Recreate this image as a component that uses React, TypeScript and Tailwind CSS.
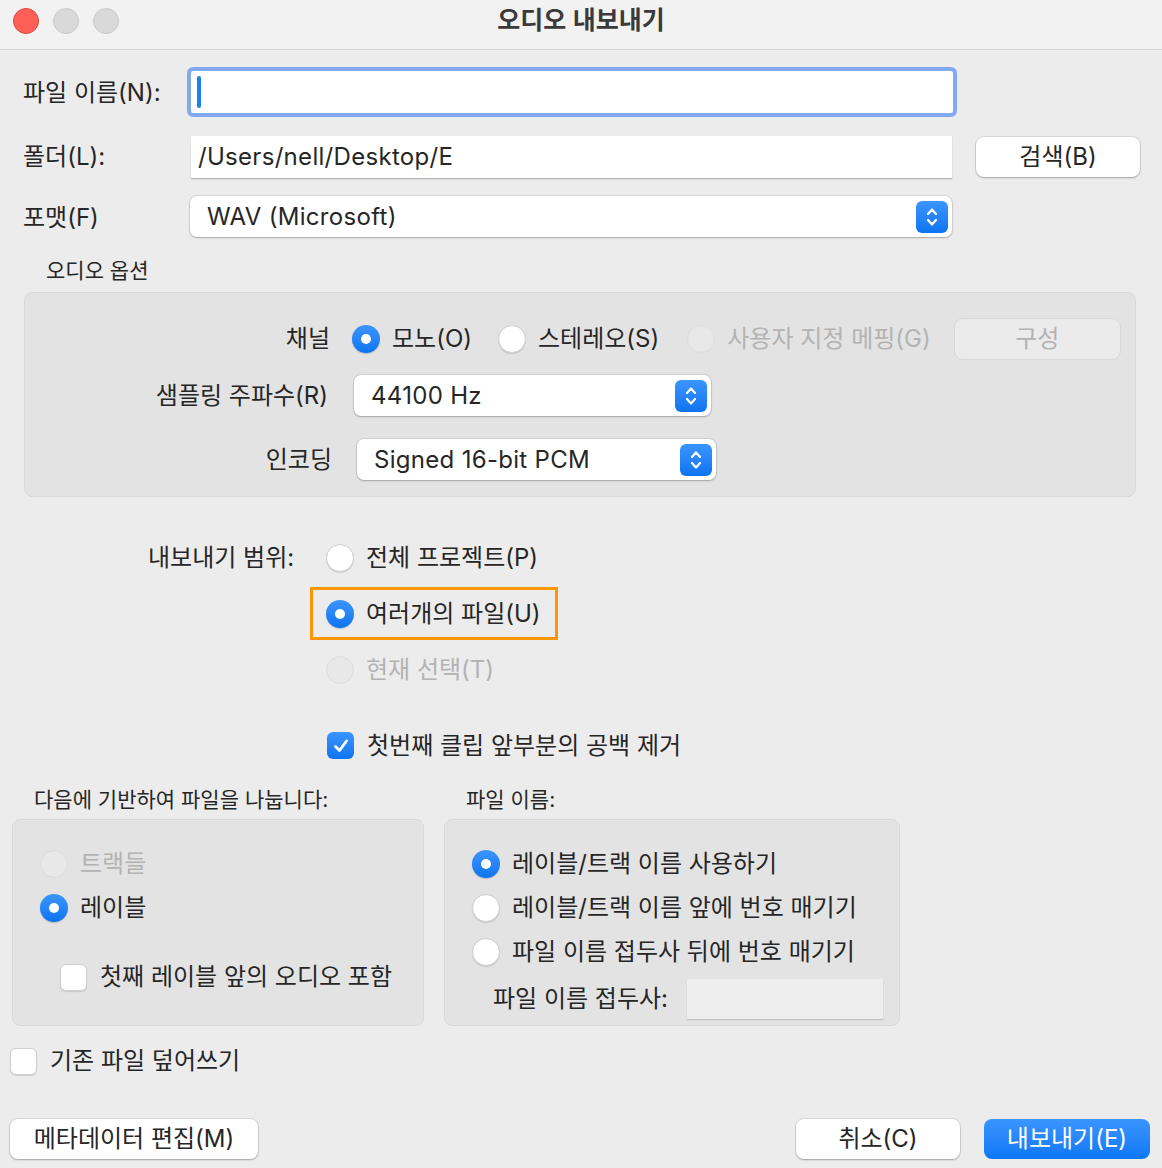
import React from 'react';

const Radio: React.FC<{ checked?: boolean; disabled?: boolean }> = ({ checked, disabled }) => {
    if (checked) {
        return (
            <div className="w-[28px] h-[28px] shrink-0 rounded-full bg-gradient-to-b from-[#3b95ff] to-[#0a74f0] flex items-center justify-center shadow-[0_1px_1px_rgba(0,0,0,0.2)]">
                <div className="w-[10px] h-[10px] rounded-full bg-white" />
            </div>
        );
    }
    if (disabled) {
        return <div className="w-[28px] h-[28px] shrink-0 rounded-full bg-[#e8e8e8] border border-[#dcdcdc]" />;
    }
    return <div className="w-[28px] h-[28px] shrink-0 rounded-full bg-white border border-[#cfcfcf] shadow-[0_1px_1px_rgba(0,0,0,0.12)]" />;
};

const Checkbox: React.FC<{ checked?: boolean }> = ({ checked }) =>
    checked ? (
        <div className="w-[27px] h-[27px] shrink-0 rounded-[6px] bg-gradient-to-b from-[#3b95ff] to-[#0a74f0] flex items-center justify-center">
            <svg width="18" height="18" viewBox="0 0 18 18">
                <path d="M3.5 9.5 L7.5 13.5 L14.5 4" fill="none" stroke="white" strokeWidth="2.8" strokeLinecap="round" strokeLinejoin="round" />
            </svg>
        </div>
    ) : (
        <div className="w-[27px] h-[27px] shrink-0 rounded-[6px] bg-white border border-[#cfcfcf] shadow-[0_1px_1px_rgba(0,0,0,0.12)]" />
    );

const Stepper = () => (
    <div className="w-[32px] h-[32px] shrink-0 rounded-[6px] bg-gradient-to-b from-[#3b95ff] to-[#0a74f0] flex items-center justify-center">
        <svg width="16" height="24" viewBox="0 0 16 24">
            <path d="M4 9 L8 4.5 L12 9" fill="none" stroke="white" strokeWidth="2.2" strokeLinecap="round" strokeLinejoin="round" />
            <path d="M4 15 L8 19.5 L12 15" fill="none" stroke="white" strokeWidth="2.2" strokeLinecap="round" strokeLinejoin="round" />
        </svg>
    </div>
);

const Select: React.FC<{ value: string; className: string }> = ({ value, className }) => (
    <div className={`h-[41px] rounded-[7px] bg-white flex items-center justify-between pl-[17px] pr-[4px] shadow-[0_0_0_1px_rgba(0,0,0,0.08),0_1px_2px_rgba(0,0,0,0.22)] ${className}`}>
        <span className="tracking-[0.3px]">{value}</span>
        <Stepper />
    </div>
);

const Button: React.FC<{ label: string; className: string; primary?: boolean; disabled?: boolean }> = ({ label, className, primary, disabled }) => (
    <div
        className={`h-[40px] rounded-[8px] flex items-center justify-center shrink-0 ${
            primary
                ? 'bg-gradient-to-b from-[#3a95ff] to-[#0b77f5] text-white'
                : disabled
                ? 'bg-[#ebebeb] text-[#b3b3b3] shadow-[0_0_0_1px_rgba(0,0,0,0.05)]'
                : 'bg-white shadow-[0_0_0_1px_rgba(0,0,0,0.08),0_1px_2px_rgba(0,0,0,0.25)]'
        } ${className}`}
    >
        {label}
    </div>
);

export default function App() {
    return (
        <div className="w-[1162px] h-[1168px] bg-[#ececec] text-[#262626] text-[24px] leading-none font-[Inter,'Noto_Sans_CJK_KR',sans-serif] overflow-hidden">
            {/* title bar */}
            <div className="h-[50px] bg-[#f2f2f2] border-b border-[#d4d4d4] grid grid-cols-[1fr_auto_1fr]">
                <div className="flex gap-[14px] pl-[13px] pt-[8px]">
                    <div className="w-[26px] h-[26px] rounded-full bg-[#fe5f57] border border-[#e0443e]" />
                    <div className="w-[26px] h-[26px] rounded-full bg-[#d9d9d9] border border-[#c9c9c9]" />
                    <div className="w-[26px] h-[26px] rounded-full bg-[#d9d9d9] border border-[#c9c9c9]" />
                </div>
                <div className="pt-[8px] text-[25px] font-semibold text-[#3a3a3a]">오디오 내보내기</div>
                <div />
            </div>

            {/* file name */}
            <div className="flex items-center mt-[17px] h-[50px]">
                <div className="w-[187px] pl-[23px] pt-[2px] shrink-0">파일 이름(N):</div>
                <div className="w-[770px] h-[50px] rounded-[6px] border-[4px] border-[#82a9ee] bg-white flex items-center pl-[6px]">
                    <div className="w-[4px] h-[32px] rounded-full bg-[#1b7ff5]" />
                </div>
            </div>

            {/* folder */}
            <div className="flex items-center mt-[19px] h-[42px]">
                <div className="w-[191px] pl-[23px] shrink-0">폴더(L):</div>
                <div className="w-[761px] h-[42px] bg-white flex items-center pl-[7px] tracking-[0.3px] shadow-[0_1px_1px_rgba(0,0,0,0.25)]">/Users/nell/Desktop/E</div>
                <Button label="검색(B)" className="ml-[24px] w-[164px]" />
            </div>

            {/* format */}
            <div className="flex items-center mt-[18px] h-[41px]">
                <div className="w-[190px] pl-[23px] pt-[2px] shrink-0">포맷(F)</div>
                <Select value="WAV (Microsoft)" className="w-[762px]" />
            </div>

            <div className="mt-[22px] pl-[46px] text-[21px] leading-[24px]">오디오 옵션</div>

            {/* audio options */}
            <div className="mt-[9px] ml-[24px] w-[1112px] h-[205px] rounded-[8px] bg-[#e3e3e3] border border-[#d9d9d9] pt-[26px] flex flex-col">
                <div className="flex items-center h-[40px]">
                    <div className="w-[305px] text-right shrink-0">채널</div>
                    <div className="ml-[22px]"><Radio checked /></div>
                    <span className="ml-[12px]">모노(O)</span>
                    <div className="ml-[26px]"><Radio /></div>
                    <span className="ml-[12px]">스테레오(S)</span>
                    <div className="ml-[28px]"><Radio disabled /></div>
                    <span className="ml-[12px] text-[#b3b3b3]">사용자 지정 메핑(G)</span>
                    <Button label="구성" disabled className="ml-[24px] w-[165px]" />
                </div>
                <div className="flex items-center h-[41px] mt-[16px]">
                    <div className="w-[303px] text-right shrink-0">샘플링 주파수(R)</div>
                    <Select value="44100 Hz" className="ml-[26px] w-[357px]" />
                </div>
                <div className="flex items-center h-[41px] mt-[23px]">
                    <div className="w-[307px] text-right shrink-0">인코딩</div>
                    <Select value="Signed 16-bit PCM" className="ml-[25px] w-[359px]" />
                </div>
            </div>

            {/* export range */}
            <div className="mt-[34px] flex pl-[148px]">
                <div className="w-[178px] h-[53px] flex items-center shrink-0">내보내기 범위:</div>
                <div className="flex flex-col gap-[3px]">
                    <div className="h-[53px] flex items-center gap-[12px]">
                        <Radio />
                        <span>전체 프로젝트(P)</span>
                    </div>
                    <div className="h-[53px] -ml-[16px] pl-[13px] w-[248px] border-[3px] border-[#ff9500] flex items-center gap-[12px]">
                        <Radio checked />
                        <span>여러개의 파일(U)</span>
                    </div>
                    <div className="h-[53px] flex items-center gap-[12px]">
                        <Radio disabled />
                        <span className="text-[#b3b3b3]">현재 선택(T)</span>
                    </div>
                </div>
            </div>

            <div className="mt-[23px] h-[53px] pl-[327px] flex items-center gap-[13px]">
                <Checkbox checked />
                <span>첫번째 클립 앞부분의 공백 제거</span>
            </div>

            {/* split section labels */}
            <div className="mt-[15px] h-[24px] flex items-center text-[21px]">
                <div className="w-[466px] pl-[34px] shrink-0">다음에 기반하여 파일을 나눕니다:</div>
                <div>파일 이름:</div>
            </div>

            <div className="mt-[8px] flex pl-[12px] gap-[20px]">
                <div className="w-[412px] h-[207px] rounded-[8px] bg-[#e3e3e3] border border-[#d9d9d9] pt-[26px] pl-[27px] flex flex-col gap-[8px]">
                    <div className="h-[36px] flex items-center gap-[12px]">
                        <Radio disabled />
                        <span className="text-[#b3b3b3]">트랙들</span>
                    </div>
                    <div className="h-[36px] flex items-center gap-[12px]">
                        <Radio checked />
                        <span>레이블</span>
                    </div>
                    <div className="h-[36px] mt-[25px] ml-[20px] flex items-center gap-[13px]">
                        <Checkbox />
                        <span>첫째 레이블 앞의 오디오 포함</span>
                    </div>
                </div>
                <div className="w-[456px] h-[207px] rounded-[8px] bg-[#e3e3e3] border border-[#d9d9d9] pt-[26px] pl-[27px] flex flex-col gap-[8px]">
                    <div className="h-[36px] flex items-center gap-[12px]">
                        <Radio checked />
                        <span>레이블/트랙 이름 사용하기</span>
                    </div>
                    <div className="h-[36px] flex items-center gap-[12px]">
                        <Radio />
                        <span>레이블/트랙 이름 앞에 번호 매기기</span>
                    </div>
                    <div className="h-[36px] flex items-center gap-[12px]">
                        <Radio />
                        <span>파일 이름 접두사 뒤에 번호 매기기</span>
                    </div>
                    <div className="h-[40px] mt-[1px] ml-[21px] flex items-center">
                        <div className="w-[194px] shrink-0">파일 이름 접두사:</div>
                        <div className="w-[196px] h-[40px] bg-[#eeeeee] shadow-[0_1px_1px_rgba(0,0,0,0.15)]" />
                    </div>
                </div>
            </div>

            <div className="mt-[17px] h-[36px] pl-[10px] flex items-center gap-[13px]">
                <Checkbox />
                <span>기존 파일 덮어쓰기</span>
            </div>

            {/* buttons */}
            <div className="mt-[40px] flex items-center pl-[10px] pr-[12px]">
                <Button label="메타데이터 편집(M)" className="w-[248px]" />
                <div className="flex-1" />
                <Button label="취소(C)" className="w-[164px]" />
                <Button label="내보내기(E)" primary className="ml-[24px] w-[166px]" />
            </div>
        </div>
    );
}
